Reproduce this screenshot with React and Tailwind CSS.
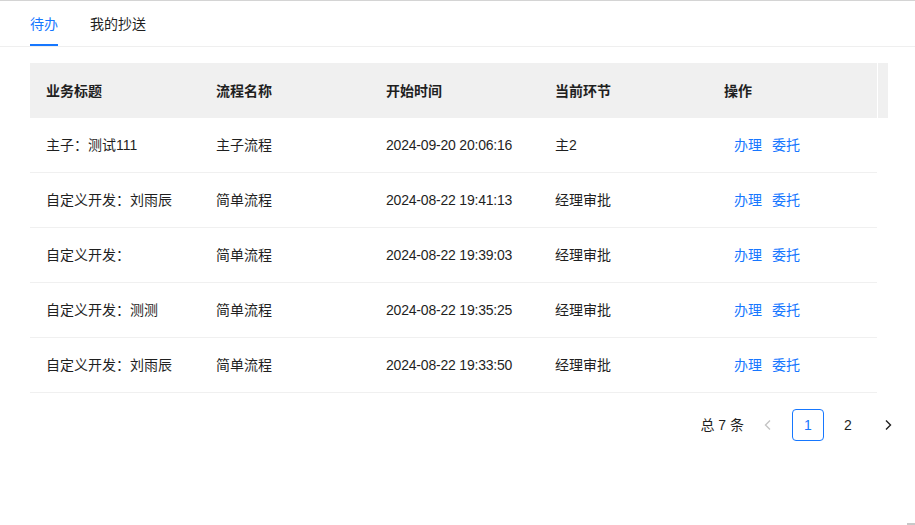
import React, { useState } from 'react';

const font = { fontFamily: '"Liberation Sans", "Noto Sans CJK SC", sans-serif' };

const columns = [
    { title: '业务标题', w: 'w-[170px]' },
    { title: '流程名称', w: 'w-[170px]' },
    { title: '开始时间', w: 'w-[169px]' },
    { title: '当前环节', w: 'w-[169px]' },
    { title: '操作', w: 'w-[169px]' },
];

const rows = [
    ['主子：测试111', '主子流程', '2024-09-20 20:06:16', '主2'],
    ['自定义开发：刘雨辰', '简单流程', '2024-08-22 19:41:13', '经理审批'],
    ['自定义开发：', '简单流程', '2024-08-22 19:39:03', '经理审批'],
    ['自定义开发：测测', '简单流程', '2024-08-22 19:35:25', '经理审批'],
    ['自定义开发：刘雨辰', '简单流程', '2024-08-22 19:33:50', '经理审批'],
];

function Chevron({ dir, color }) {
    const pts = dir === 'left' ? '8,1.5 3.5,6 8,10.5' : '4,1.5 8.5,6 4,10.5';
    return (
        <svg width="12" height="12" viewBox="0 0 12 12" fill="none">
            <polyline points={pts} stroke={color} strokeWidth="1.4" strokeLinejoin="miter" />
        </svg>
    );
}

export default function App() {
    const [tab, setTab] = useState(0);
    const tabs = ['待办', '我的抄送'];

    return (
        <div className="relative w-[915px] h-[525px] bg-white border-t border-[#d4d4d4] text-[14px] text-[#1f1f1f] overflow-hidden" style={font}>
            {/* tabs */}
            <div className="flex h-[46px] border-b border-[#efefef] pl-[30px] gap-[32px]">
                {tabs.map((t, i) => (
                    <div
                        key={t}
                        onClick={() => setTab(i)}
                        className={`relative flex items-center leading-[22px] cursor-pointer ${tab === i ? 'text-[#1677ff]' : 'text-[#1f1f1f]'}`}
                    >
                        {t}
                        {tab === i && <div className="absolute left-0 right-0 bottom-0 h-[2px] bg-[#1677ff]" />}
                    </div>
                ))}
            </div>

            {/* table */}
            <div className="ml-[30px] mt-[16px] w-[858px]">
                <div className="flex">
                    <div className="flex w-[847px] h-[55px] bg-[#f0f0f0] font-bold">
                        {columns.map((c) => (
                            <div key={c.title} className={`${c.w} flex items-center px-[16px] leading-[22px]`}>
                                {c.title}
                            </div>
                        ))}
                    </div>
                    <div className="w-[1px] bg-white" />
                    <div className="w-[10px] h-[55px] bg-[#f0f0f0]" />
                </div>
                {rows.map((r, i) => (
                    <div key={i} className="flex w-[847px] h-[55px] border-b border-[#f0f0f0]">
                        {r.map((v, j) => (
                            <div
                                key={j}
                                className={`${columns[j].w} flex items-center px-[16px] leading-[22px] whitespace-nowrap ${j === 2 ? 'tracking-[-0.2px]' : ''}`}
                            >
                                {v}
                            </div>
                        ))}
                        <div className={`${columns[4].w} flex items-center pl-[26px] gap-[10px] text-[#1677ff]`}>
                            <span className="cursor-pointer">办理</span>
                            <span className="cursor-pointer">委托</span>
                        </div>
                    </div>
                ))}
            </div>

            {/* pagination */}
            <div className="flex items-center justify-end mt-[16px] w-[904px] h-[32px]">
                <span className="mr-[8px] leading-[32px]">总 7 条</span>
                <div className="w-[32px] h-[32px] flex items-center justify-center mr-[8px]">
                    <Chevron dir="left" color="#c4c4c4" />
                </div>
                <div className="w-[32px] h-[32px] flex items-center justify-center mr-[8px] border border-[#1677ff] rounded-[4px] text-[#1677ff]">
                    1
                </div>
                <div className="w-[32px] h-[32px] flex items-center justify-center mr-[8px]">2</div>
                <div className="w-[32px] h-[32px] flex items-center justify-center">
                    <Chevron dir="right" color="#1f1f1f" />
                </div>
            </div>

            <div className="absolute right-0 bottom-0 w-[8px] h-[2px] bg-[#c8c8c8]" />
        </div>
    );
}
